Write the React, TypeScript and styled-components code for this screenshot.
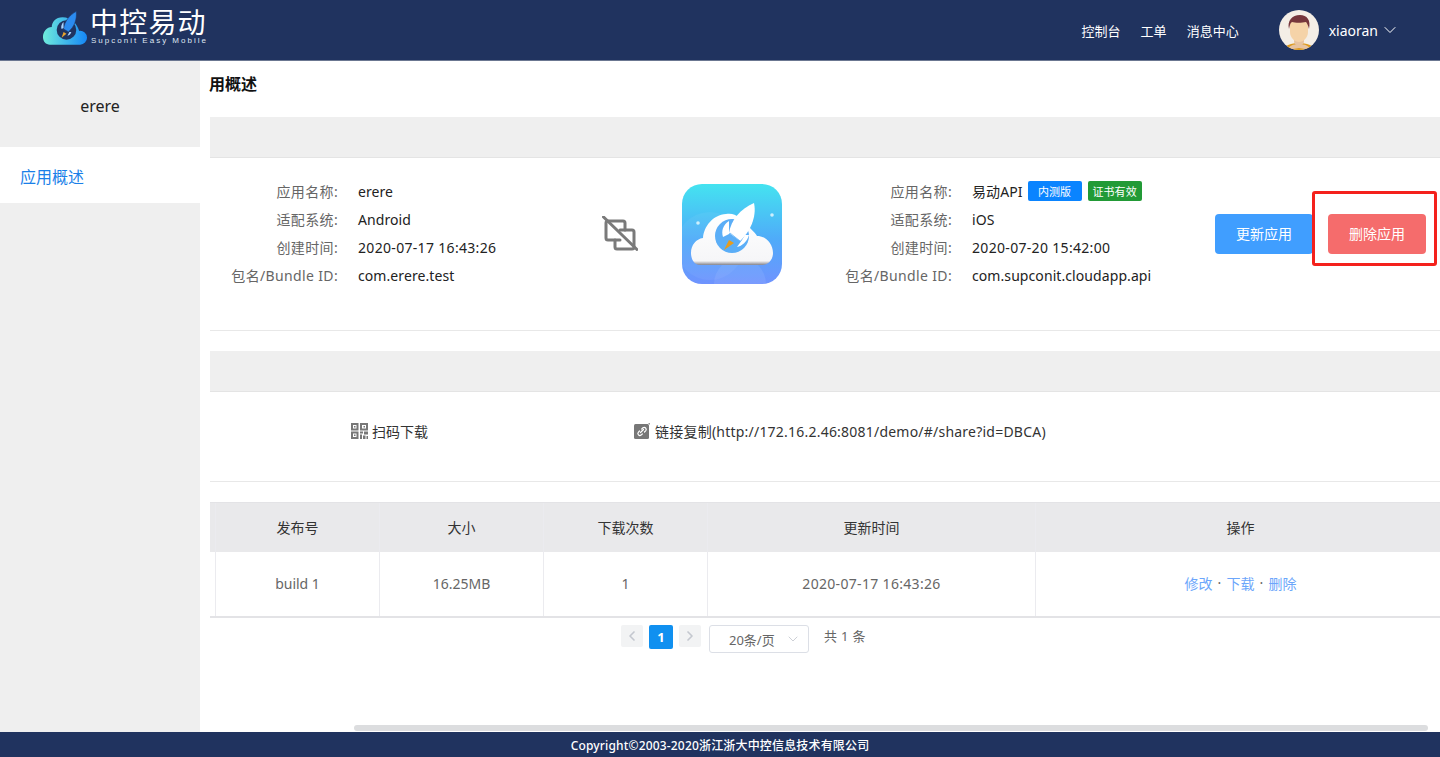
import { Fragment } from 'react';
import styled, { createGlobalStyle } from 'styled-components';
import { ChevronDown, ChevronLeft, ChevronRight } from 'lucide-react';

const GlobalStyle = createGlobalStyle`
  html, body {
    margin: 0;
    padding: 0;
    height: 100%;
    overflow: hidden;
    background: #fff;
    font-family: "Noto Sans", "Noto Sans CJK SC", sans-serif;
    font-size: 14px;
    color: #333;
  }
  * {
    box-sizing: border-box;
  }
`;

const Page = styled.div`
  display: flex;
  flex-direction: column;
  width: 1440px;
  height: 757px;
  position: relative;
`;

const Header = styled.header`
  display: flex;
  align-items: center;
  flex: none;
  height: 61px;
  padding-left: 42px;
  background: #20335f;
  border-bottom: 1px solid #6b7791;
  color: #fff;
`;

const Logo = styled.div`
  display: flex;
  align-items: flex-start;
  gap: 2px;
  margin-top: -5px;
`;

const LogoWords = styled.div`
  display: flex;
  flex-direction: column;
  width: 118px;
`;

const LogoTitle = styled.span`
  font-size: 28px;
  line-height: 27px;
  letter-spacing: 1.2px;
  font-weight: 400;
  white-space: nowrap;
`;

const LogoSub = styled.span`
  padding-left: 1px;
  font-family: "Liberation Sans", sans-serif;
  font-size: 8px;
  line-height: 9px;
  letter-spacing: 2px;
  white-space: nowrap;
  color: #dfe6f2;
`;

const Nav = styled.nav`
  display: flex;
  gap: 20px;
  margin-left: auto;
  font-size: 13px;
`;

const UserMenu = styled.div`
  display: flex;
  align-items: center;
  gap: 10px;
  margin-left: 40px;
  margin-right: 40px;
  font-size: 14px;
`;

const MenuCaret = styled(ChevronDown)`
  margin-left: -8px;
`;

const Body = styled.div`
  display: flex;
  flex: 1;
  min-height: 0;
`;

const Sidebar = styled.aside`
  flex: none;
  width: 200px;
  background: #efefef;
`;

const AppName = styled.div`
  display: flex;
  align-items: center;
  justify-content: center;
  height: 86px;
  padding-top: 4px;
  font-size: 16px;
  color: #222;
`;

const SideItem = styled.div`
  display: flex;
  align-items: center;
  height: 56px;
  padding: 2px 0 0 20px;
  background: #fff;
  color: #1a7fe8;
  font-size: 16px;
`;

const Main = styled.main`
  flex: 1;
  min-width: 0;
  padding-left: 10px;
  position: relative;
`;

const PageTitle = styled.h1`
  display: flex;
  align-items: center;
  height: 56px;
  margin: 0 0 0 -1px;
  padding-bottom: 12px;
  font-size: 16px;
  font-weight: 600;
  color: #111;
`;

const Band = styled.div`
  height: 41px;
  background: #efefef;
  border-bottom: 1px solid #e4e4e4;
`;

const InfoRow = styled.section`
  display: flex;
  align-items: center;
  height: 173px;
  padding-bottom: 20px;
  margin-bottom: 20px;
  border-bottom: 1px solid #e8e8e8;
`;

const InfoList = styled.dl<{ $labelWidth: number; $width: number }>`
  display: grid;
  grid-template-columns: ${(p) => p.$labelWidth}px 1fr;
  column-gap: 20px;
  grid-auto-rows: 28px;
  align-items: center;
  flex: none;
  width: ${(p) => p.$width}px;
  margin: 0;
  padding-bottom: 2px;
`;

const InfoLabel = styled.dt`
  text-align: right;
  color: #666;
  white-space: nowrap;
  letter-spacing: 0.35px;
`;

const InfoValue = styled.dd`
  display: flex;
  align-items: center;
  gap: 5px;
  margin: 0;
  color: #222;
  white-space: nowrap;
  letter-spacing: 0.08px;
`;

const DateText = styled.span`
  letter-spacing: 0.32px;
`;

const Tag = styled.span<{ $bg: string }>`
  display: inline-flex;
  align-items: center;
  justify-content: center;
  width: 54px;
  height: 20px;
  border-radius: 2px;
  background: ${(p) => p.$bg};
  color: #fff;
  font-size: 11px;

  & + & {
    margin-left: 1px;
  }
`;

const LinkIconSlot = styled.div`
  flex: none;
  width: 36px;
  height: 36px;
  margin-right: 44px;
`;

const AppIconSlot = styled.div`
  flex: none;
  width: 100px;
  height: 100px;
`;

const Actions = styled.div`
  display: flex;
  gap: 15px;
`;

const ActionButton = styled.button<{ $bg: string }>`
  display: block;
  width: 98px;
  height: 40px;
  padding: 0 0 2px;
  border: 0;
  border-radius: 4px;
  background: ${(p) => p.$bg};
  color: #fff;
  font: inherit;
  font-size: 14px;
`;

const Highlighted = styled.div`
  position: relative;
`;

const RedFrame = styled.div`
  position: absolute;
  left: -16px;
  top: -23px;
  width: 125px;
  height: 75px;
  border: 3px solid #f4211c;
  border-radius: 3px;
`;

const ShareRow = styled.section`
  display: flex;
  align-items: center;
  height: 90px;
  margin-bottom: 20px;
  padding: 0 0 11px 141px;
  border-bottom: 1px solid #e8e8e8;
  color: #333;
`;

const ShareItem = styled.div<{ $width?: number; $gap: number }>`
  display: flex;
  align-items: center;
  gap: ${(p) => p.$gap}px;
  width: ${(p) => (p.$width ? `${p.$width}px` : 'auto')};
  white-space: nowrap;
`;

const ShareUrl = styled.span`
  letter-spacing: 0.22px;
`;

const Table = styled.div`
  overflow: hidden;
  border-top: 1px solid #e3e3e6;
  border-bottom: 2px solid #e3e3e6;
`;

const TableRow = styled.div<{ $head?: boolean }>`
  display: grid;
  grid-template-columns: 5px 164px 164px 164px 328px 410px;
  height: ${(p) => (p.$head ? '49px' : '64px')};
  background: ${(p) => (p.$head ? '#e9e9eb' : '#fff')};
  color: ${(p) => (p.$head ? '#333' : '#666')};
`;

const Cell = styled.div`
  display: flex;
  align-items: center;
  justify-content: center;
  padding-bottom: 2px;
  border-left: 1px solid #ebebef;
`;

const Strip = styled.div``;

const RowLinks = styled.span`
  display: inline-flex;
  color: #6ca6fb;
`;

const LinkDot = styled.span`
  width: 14px;
  text-align: center;
  color: #666;
`;

const Pager = styled.div`
  display: flex;
  align-items: flex-start;
  padding: 7px 0 0 411px;
`;

const PageStep = styled.div<{ $gap: number }>`
  display: flex;
  align-items: center;
  justify-content: center;
  width: 22px;
  height: 22px;
  margin-right: ${(p) => p.$gap}px;
  border-radius: 2px;
  background: #f2f3f4;
  color: #c4c8cf;
`;

const PageCurrent = styled.div`
  display: flex;
  align-items: center;
  justify-content: center;
  width: 24px;
  height: 24px;
  margin-right: 6px;
  border-radius: 2px;
  background: #1090f0;
  color: #fff;
  font-size: 13px;
  font-weight: 700;
`;

const PageSize = styled.div`
  display: flex;
  align-items: center;
  justify-content: space-between;
  width: 100px;
  height: 28px;
  padding: 0 7px 0 19px;
  border: 1px solid #dcdfe6;
  border-radius: 3px;
  color: #666;
  font-size: 13px;
`;

const PageTotal = styled.span`
  margin-left: 15px;
  color: #666;
  font-size: 13px;
  line-height: 22px;
  letter-spacing: 0.3px;
`;

const ScrollThumb = styled.div`
  position: absolute;
  left: 154px;
  right: 12px;
  bottom: 1px;
  height: 6px;
  border-radius: 3px;
  background: #dcdddf;
`;

const Footer = styled.footer`
  display: flex;
  align-items: center;
  justify-content: center;
  flex: none;
  height: 25px;
  background: #20335f;
  color: #fff;
  font-size: 12px;
  font-weight: 500;
  letter-spacing: 0.17px;
`;

const LogoMark = () => (
  <svg width="46" height="37" viewBox="0 0 47 37">
    <defs>
      <linearGradient id="logoCloud" x1="0" x2="1" y1="0" y2="0">
        <stop offset="0" stopColor="#6fecdc" />
        <stop offset="1" stopColor="#1587f7" />
      </linearGradient>
    </defs>
    <path
      d="M8 36H39a7 7 0 0 0 7-7a7 7 0 0 0-8-7C36 15 30 8 21 8C14 8 10 13 10 18C5 18 1 23 1 28C1 33 4 36 8 36z"
      fill="url(#logoCloud)"
    />
    <circle cx="25" cy="21" r="10" fill="#20335f" />
    <path d="M35 2C36 10 33 18 27 23L22 20C23 12 28 6 35 2z" fill="#2b8bf0" stroke="#20335f" strokeWidth="0.6" />
    <path d="M22 13c-2 2-3 5-2 7l2-1zM28 23l-2 4c2-.5 3.500-2 4-4z" fill="#a9d4ff" />
    <path d="M22 23l3 2-5 4z" fill="#e8a32c" />
  </svg>
);

const Avatar = () => (
  <svg width="40" height="40" viewBox="0 0 40 40">
    <defs>
      <clipPath id="avatarClip">
        <circle cx="20" cy="20" r="20" />
      </clipPath>
    </defs>
    <g clipPath="url(#avatarClip)">
      <rect width="40" height="40" fill="#f4eee6" />
      <path d="M5 40c1-5 7-7 15-7s14 2 15 7z" fill="#dd9a1f" />
      <path d="M8 40c2-4 6-6 12-6s10 2 12 6l-12-2z" fill="#e7c3a0" />
      <rect x="15" y="24" width="10" height="11" rx="4" fill="#e7c3a0" />
      <path d="M11 14c0-5 18-5 18 0v8c0 6-5 10-9 10s-9-4-9-10z" fill="#f5d3a8" />
      <path d="M10 19c-2-8 3-14 11-14 7 0 11 5 9 14-1-4-2-6-3-7-4 1-11 1-14 0-2 1-2 3-3 7z" fill="#76363c" />
    </g>
  </svg>
);

const UnlinkIcon = () => (
  <svg width="36" height="36" viewBox="0 0 36 36" fill="none" stroke="#7a7a7a" strokeLinecap="round" strokeWidth="3">
    <path d="M23 14V7a2 2 0 0 0-2-2H6a2 2 0 0 0-2 2v15a2 2 0 0 0 2 2h12" />
    <path d="M13 24v7a2 2 0 0 0 2 2h15a2 2 0 0 0 2-2V16a2 2 0 0 0-2-2H18" />
    <path d="M1.500 1L35 33.500" />
  </svg>
);

const AppIcon = () => (
  <svg width="100" height="100" viewBox="0 0 100 100">
    <defs>
      <linearGradient id="appBg" x1="0" x2="0" y1="0" y2="1">
        <stop offset="0" stopColor="#44e3f0" />
        <stop offset="0.55" stopColor="#4fabf9" />
        <stop offset="1" stopColor="#6f93fe" />
      </linearGradient>
      <linearGradient id="appEdge" x1="0" x2="0" y1="0" y2="1">
        <stop offset="0" stopColor="#fff" />
        <stop offset="0.92" stopColor="#f6f6f8" />
        <stop offset="1" stopColor="#85858c" />
      </linearGradient>
      <clipPath id="appClip">
        <rect width="100" height="100" rx="20" />
      </clipPath>
    </defs>
    <g clipPath="url(#appClip)">
      <rect width="100" height="100" fill="url(#appBg)" />
      <circle cx="28" cy="62" r="34" fill="#fff" opacity="0.05" />
      <circle cx="58" cy="100" r="26" fill="#fff" opacity="0.08" />
      <circle cx="16" cy="39" r="1.800" fill="#cdeffd" />
      <circle cx="90" cy="31" r="1.800" fill="#cdeffd" />
      <path
        d="M18 81C12 81 9 75 9 69C9 61 14 55 21 54C22 42 31 31 44 30C50 29 54 31 56 33L68 44C72 48 74 50 75 52C84 52 91 60 91 69C91 76 86 81 80 81Z"
        fill="url(#appEdge)"
      />
      <circle cx="50" cy="52" r="17" fill="#5baef7" />
      <path d="M72 19C75 33 68 48 58 57L47 49C49 36 58 25 72 19z" fill="#fff" />
      <path d="M47 37C41 41 39 47 41 53L47 50zM60 56L55 63C60 62 65 58 67 51L63 51z" fill="#fff" />
      <path d="M48 49L58 57" stroke="#5baef7" strokeWidth="0.8" fill="none" />
      <path d="M47 56L52 59L42 66z" fill="#e79c1c" />
    </g>
  </svg>
);

const QrIcon = () => (
  <svg width="17" height="16" viewBox="0 0 17 16" fill="#777">
    <path d="M0 0h7.500v7.500H0zM2 2v3.500h3.500V2zM9 0h8v7.500H9zM11 2v3.500h4V2zM0 8.500h7.500V16H0zM2 10.500V14h3.500v-3.500z" fillRule="evenodd" />
    <path d="M3 3h1.500v1.500H3zM12.500 3H14v1.500h-1.500zM3 11.500h1.500V13H3z" />
    <path d="M9 8.500h3v2H9zM13 8.500h4v3h-4zM9 11.500h2V16H9zM12 12.500h2.500V16H12zM15.500 13H17v3h-1.500z" />
  </svg>
);

const LinkIcon = () => (
  <svg width="16" height="16" viewBox="0 0 16 16">
    <rect y="1" width="15" height="15" rx="1.500" fill="#777" />
    <path d="M14 0h2v2z" fill="#999" />
    <path
      d="M6.500 9.500l3-3M5.500 8L4.300 9.300a2 2 0 0 0 2.800 2.800L8.300 11M7.700 6L9 4.800a2 2 0 0 1 2.800 2.800L10.500 9"
      fill="none"
      stroke="#fff"
      strokeWidth="1.200"
      strokeLinecap="round"
    />
  </svg>
);

const androidInfo = [
  ['应用名称:', 'erere'],
  ['适配系统:', 'Android'],
  ['创建时间:', <DateText key="date">2020-07-17 16:43:26</DateText>],
  ['包名/Bundle ID:', 'com.erere.test'],
];

const iosInfo = [
  ['适配系统:', 'iOS'],
  ['创建时间:', <DateText key="date">2020-07-20 15:42:00</DateText>],
  ['包名/Bundle ID:', 'com.supconit.cloudapp.api'],
];

export default function App() {
  return (
    <Page>
      <GlobalStyle />
      <Header>
        <Logo>
          <LogoMark />
          <LogoWords>
            <LogoTitle>中控易动</LogoTitle>
            <LogoSub>Supconit Easy Mobile</LogoSub>
          </LogoWords>
        </Logo>
        <Nav>
          <span>控制台</span>
          <span>工单</span>
          <span>消息中心</span>
        </Nav>
        <UserMenu>
          <Avatar />
          <span>xiaoran</span>
          <MenuCaret size={20} strokeWidth={1.2} />
        </UserMenu>
      </Header>
      <Body>
        <Sidebar>
          <AppName>erere</AppName>
          <SideItem>应用概述</SideItem>
        </Sidebar>
        <Main>
          <PageTitle>用概述</PageTitle>
          <Band />
          <InfoRow>
            <InfoList $labelWidth={128} $width={392}>
              {androidInfo.map(([label, value], i) => (
                <Fragment key={i}>
                  <InfoLabel>{label}</InfoLabel>
                  <InfoValue>{value}</InfoValue>
                </Fragment>
              ))}
            </InfoList>
            <LinkIconSlot>
              <UnlinkIcon />
            </LinkIconSlot>
            <AppIconSlot>
              <AppIcon />
            </AppIconSlot>
            <InfoList $labelWidth={170} $width={433}>
              <InfoLabel>应用名称:</InfoLabel>
              <InfoValue>
                易动API
                <Tag $bg="#0a84ff">内测版</Tag>
                <Tag $bg="#229a36">证书有效</Tag>
              </InfoValue>
              {iosInfo.map(([label, value], i) => (
                <Fragment key={i}>
                  <InfoLabel>{label}</InfoLabel>
                  <InfoValue>{value}</InfoValue>
                </Fragment>
              ))}
            </InfoList>
            <Actions>
              <ActionButton $bg="#409eff">更新应用</ActionButton>
              <Highlighted>
                <ActionButton $bg="#f56c6c">删除应用</ActionButton>
                <RedFrame />
              </Highlighted>
            </Actions>
          </InfoRow>
          <Band />
          <ShareRow>
            <ShareItem $width={283} $gap={4}>
              <QrIcon />
              <span>扫码下载</span>
            </ShareItem>
            <ShareItem $gap={5}>
              <LinkIcon />
              <ShareUrl>链接复制(http://172.16.2.46:8081/demo/#/share?id=DBCA)</ShareUrl>
            </ShareItem>
          </ShareRow>
          <Table>
            <TableRow $head>
              <Strip />
              <Cell>发布号</Cell>
              <Cell>大小</Cell>
              <Cell>下载次数</Cell>
              <Cell>更新时间</Cell>
              <Cell>操作</Cell>
            </TableRow>
            <TableRow>
              <Strip />
              <Cell>build 1</Cell>
              <Cell>16.25MB</Cell>
              <Cell>1</Cell>
              <Cell>
                <DateText>2020-07-17 16:43:26</DateText>
              </Cell>
              <Cell>
                <RowLinks>
                  修改
                  <LinkDot>·</LinkDot>
                  下载
                  <LinkDot>·</LinkDot>
                  删除
                </RowLinks>
              </Cell>
            </TableRow>
          </Table>
          <Pager>
            <PageStep $gap={6}>
              <ChevronLeft size={16} strokeWidth={2.5} />
            </PageStep>
            <PageCurrent>1</PageCurrent>
            <PageStep $gap={8}>
              <ChevronRight size={16} strokeWidth={2.5} />
            </PageStep>
            <PageSize>
              20条/页
              <ChevronDown size={16} strokeWidth={1.2} color="#c0c4cc" />
            </PageSize>
            <PageTotal>共 1 条</PageTotal>
          </Pager>
          <ScrollThumb />
        </Main>
      </Body>
      <Footer>Copyright©2003-2020浙江浙大中控信息技术有限公司</Footer>
    </Page>
  );
}
